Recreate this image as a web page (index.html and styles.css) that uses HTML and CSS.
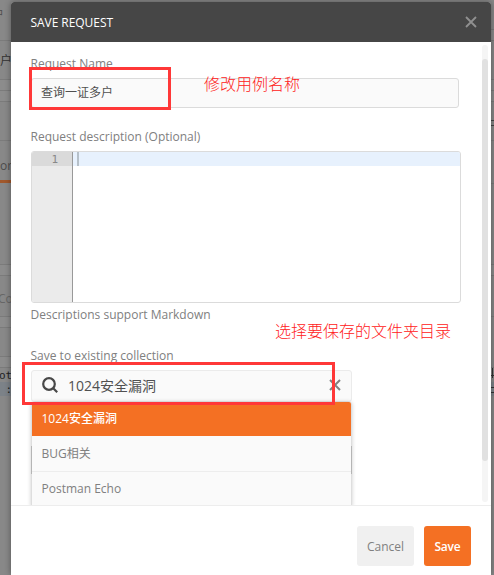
FILE: index.html
```html
<!DOCTYPE html>
<html lang="zh">
<head>
<meta charset="utf-8">
<title>Save Request</title>
<link rel="stylesheet" href="styles.css">
</head>
<body>
<div class="screen">
  <div class="page page-left">
    <div class="strip h41 small">中</div>
    <div class="strip h39 text-dark">户</div>
    <div class="strip h11 light"></div>
    <div class="strip h11 light"></div>
    <div class="strip h39"></div>
    <div class="strip h39 tab">or</div>
    <div class="strip h3 orange"></div>
    <div class="strip h82"></div>
    <div class="strip h11 light"></div>
    <div class="strip h41 text">Co</div>
    <div class="strip h11 light"></div>
    <div class="strip h29"></div>
    <div class="strip h11 light"></div>
    <div class="strip h14 mono">ot</div>
    <div class="strip h14 mono active">&nbsp;:</div>
  </div>
  <main class="modal">
    <header class="modal-header">
      <h1>SAVE REQUEST</h1>
      <svg class="close" viewBox="0 0 12 12"><path d="M1 1L11 11M11 1L1 11"/></svg>
    </header>
    <section class="modal-body">
      <div class="form">
        <label>Request Name</label>
        <div class="name-row">
          <div class="input">查询一证多户</div>
          <div class="mark mark-name"></div>
          <span class="note note-name">修改用例名称</span>
        </div>
        <label class="description-label">Request description (Optional)</label>
        <div class="editor">
          <div class="gutter"><div class="line-number">1</div></div>
          <div class="code"><div class="line"><i class="caret"></i></div></div>
        </div>
        <p class="hint">Descriptions support Markdown</p>
        <label class="collection-label">Save to existing collection</label>
        <div class="picker">
          <div class="search">
            <svg class="magnifier" viewBox="0 0 16 16"><circle cx="7" cy="7" r="5.8"/><path d="M11 11L15.2 15.2"/></svg>
            <span>1024安全漏洞</span>
            <svg class="clear" viewBox="0 0 12 12"><path d="M1 1L11 11M11 1L1 11"/></svg>
          </div>
          <div class="options">
            <div class="option selected">1024安全漏洞</div>
            <div class="option">BUG相关</div>
            <div class="option">Postman Echo</div>
          </div>
          <div class="mark mark-picker"></div>
          <span class="note note-picker">选择要保存的文件夹目录</span>
        </div>
      </div>
      <div class="scrollbar"><div class="thumb"></div></div>
    </section>
    <footer class="modal-footer">
      <button class="cancel">Cancel</button>
      <button class="save">Save</button>
    </footer>
  </main>
  <div class="page page-right">
    <div class="strip h30"></div>
    <div class="strip h11 light"></div>
    <div class="strip h39"></div>
    <div class="strip h11 light"></div>
    <div class="strip h11 light"></div>
    <div class="strip h39 equals"></div>
    <div class="strip h43"></div>
    <div class="strip h81"></div>
    <div class="strip h11 light"></div>
    <div class="strip h41"></div>
    <div class="strip h51"></div>
    <div class="strip h14 four"></div>
    <div class="strip h14 active equals-low"></div>
  </div>
</div>
</body>
</html>
```

FILE: styles.css
```css
* { box-sizing: border-box; }
body { margin: 0; overflow: hidden; font-family: "Open Sans", "Noto Sans CJK SC", sans-serif; font-size: 12px; color: #808080; }
.screen { display: grid; grid-template-columns: 11px 480px 3px; height: 575px; background: #888; }
.page { overflow: hidden; }
.strip { overflow: hidden; white-space: nowrap; border-bottom: 1px solid #7b7b7b; color: #4c4c4c; }
.light { background: #8c8c8c; }
.h3 { height: 3px; } .h11 { height: 11px; } .h14 { height: 14px; } .h29 { height: 29px; }
.h30 { height: 30px; } .h39 { height: 39px; } .h41 { height: 41px; } .h43 { height: 43px; }
.h51 { height: 51px; } .h81 { height: 81px; } .h82 { height: 82px; }
.small { font-size: 10px; line-height: 26px; text-indent: -7px; }
.text-dark { line-height: 39px; color: #333; }
.text { line-height: 46px; text-indent: -2px; color: #666; }
.tab { line-height: 49px; border: 0; }
.orange { background: #a1582c; border: 0; }
.mono { font-family: "DejaVu Sans Mono", monospace; font-size: 11px; line-height: 16px; text-indent: -1px; color: #222; border: 0; }
.active { background: #7c8288; border: 0; }
.equals { background: linear-gradient(#444, #444) 0 18px / 3px 1px no-repeat, linear-gradient(#444, #444) 0 23px / 3px 1px no-repeat; }
.four { border: 0; background: linear-gradient(#333, #333) 0 7px / 3px 1px no-repeat, linear-gradient(#333, #333) 1px 0 / 1px 10px no-repeat; }
.equals-low { background: linear-gradient(#333, #333) 0 5px / 3px 1px no-repeat, linear-gradient(#333, #333) 0 10px / 3px 1px no-repeat, #7c8288; }

.modal { position: relative; z-index: 1; margin-top: 2px; height: 573px; background: #fff; border-radius: 3px 3px 0 0; box-shadow: 0 0 6px rgba(0,0,0,.4); }
.modal-header { display: flex; align-items: center; justify-content: space-between; height: 40px; padding: 0 14px 0 19.5px; background: #464646; border-radius: 3px 3px 0 0; }
.modal-header h1 { margin: 0; font-size: 12px; font-weight: 400; color: #fff; letter-spacing: -.05px; }
.close { width: 12px; height: 12px; fill: none; stroke: #909090; stroke-width: 1.8; }

.modal-body { display: flex; justify-content: space-between; height: 463px; overflow: hidden; padding: 0 3px 0 20px; }
.form { width: 430px; padding-top: 13px; }
label { display: block; height: 18px; line-height: 18px; margin-left: -.5px; }
.name-row { position: relative; margin-top: 5px; }
.input { width: 428px; height: 30px; padding-left: 9px; border: 1px solid #dbdbdb; border-radius: 3px; background: #fafafa; line-height: 27px; color: #505050; }
.mark { position: absolute; border: 3px solid #ff3838; }
.mark-name { left: -2px; top: -11px; width: 142px; height: 43px; }
.note { position: absolute; white-space: nowrap; font-family: "Noto Sans CJK SC", sans-serif; font-weight: 300; font-size: 16px; line-height: 20px; color: #ff2020; }
.note-name { left: 173px; top: -5px; }
.description-label { margin-top: 20px; }
.editor { display: flex; height: 152px; margin-top: 5px; border: 1px solid #dbdbdb; border-radius: 3px; overflow: hidden; }
.gutter { width: 41px; background: #ebebeb; border-right: 1px solid #999; }
.line-number { height: 14px; padding-right: 14px; background: #dadada; text-align: right; font: 11px/15px "DejaVu Sans Mono", monospace; color: #888; }
.code { flex: 1; }
.line { height: 14px; padding-left: 4px; background: #e7f1fd; }
.caret { display: block; width: 2px; height: 14px; background: #b6c0c9; }
.hint { margin: 3px 0 0 -.5px; line-height: 18px; }
.collection-label { margin-top: 23px; }
.picker { position: relative; width: 321px; margin-top: 5px; }
.search { display: flex; align-items: center; height: 32px; padding: 0 10px 2px; border: 1px solid #ebebeb; border-radius: 3px; background: #fafafa; font-size: 14px; color: #505050; }
.magnifier { width: 16px; height: 16px; margin-right: 10px; fill: none; stroke: #484848; stroke-width: 2.2; }
.clear { width: 12px; height: 12px; margin-left: auto; fill: none; stroke: #808080; stroke-width: 2; }
.options { position: relative; border: 1px solid #dedede; border-top: 0; border-radius: 3px; background: #fafafa; box-shadow: 0 0 4px rgba(0,0,0,.2); }
.options::before { content: ""; position: absolute; left: -1px; right: -1px; top: 44px; height: 28px; border: solid #b5b5b5; border-width: 0 1px; }
.option { height: 35px; padding-left: 9.5px; line-height: 33px; border-bottom: 1px solid #ededed; }
.option.selected { height: 34px; color: #fff; background: #f47023; border: 0; font-weight: 500; border-radius: 2px 2px 0 0; }
.option:nth-child(2) { height: 36px; line-height: 35px; }
.mark-picker { left: -9px; top: -8px; width: 313px; height: 43px; }
.note-picker { left: 244px; top: -50px; }
.scrollbar { width: 6px; height: 457px; margin-top: 3px; background: #f5f5f5; border-radius: 3px; padding-top: 14px; }
.thumb { height: 402px; background: #e1e1e1; border-radius: 3px; }

.modal-footer { position: relative; display: flex; justify-content: flex-end; gap: 10px; height: 70px; padding: 20px 20px 0; border-top: 1px solid #ededed; background: #fff; }
button { height: 40px; padding: 0; border: 0; border-radius: 3px; font: 12px "Open Sans", sans-serif; }
.cancel { width: 57px; background: #f0f0f0; color: #808080; }
.save { width: 47px; background: #f47023; color: #fff; font-weight: 600; letter-spacing: -.2px; }
```
